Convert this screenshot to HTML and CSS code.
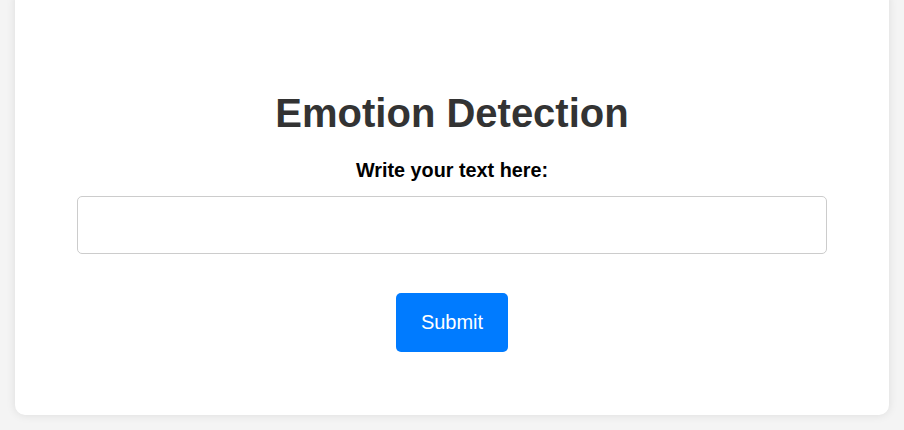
FILE: index.html
```html
<!DOCTYPE html>
<html lang="en">
<head>
<meta charset="utf-8">
<title>Emotion Detection</title>
<link rel="stylesheet" href="styles.css">
</head>
<body>
<div class="card">
  <h1 class="title">Emotion Detection</h1>
  <form class="form" onsubmit="return false">
    <label class="label" for="text">Write your text here:</label>
    <input class="input" id="text" type="text">
    <button class="btn" type="submit">Submit</button>
  </form>
</div>
</body>
</html>
```

FILE: styles.css
```css
html, body {
  margin: 0;
  padding: 0;
}
body {
  background: #f4f4f4;
  font-family: "Liberation Sans", Arial, sans-serif;
  height: 430px;
  overflow: hidden;
  padding: 0 15px;
}
.card {
  background: #fff;
  border-radius: 10px;
  box-shadow: 0 0 10px rgba(0, 0, 0, 0.1);
  height: 425px;
  margin-top: -10px;
  box-sizing: border-box;
  padding: 100px 62px 0;
  display: flex;
  flex-direction: column;
  align-items: center;
}
.title {
  margin: 0;
  font-size: 40px;
  font-weight: bold;
  color: #333;
  line-height: 46px;
}
.form {
  display: flex;
  flex-direction: column;
  align-items: center;
  width: 100%;
}
.label {
  margin-top: 23px;
  font-size: 19.8px;
  font-weight: bold;
  color: #000;
  line-height: 22px;
}
.input {
  margin-top: 15px;
  width: 100%;
  height: 58px;
  box-sizing: border-box;
  border: 1px solid #ccc;
  border-radius: 5px;
  padding: 10px;
  font-size: 16px;
  font-family: inherit;
}
.btn {
  margin-top: 39px;
  width: 112px;
  height: 59px;
  background: #007bff;
  color: #fff;
  border: none;
  border-radius: 5px;
  font-size: 20px;
  font-family: inherit;
  cursor: pointer;
}
```
